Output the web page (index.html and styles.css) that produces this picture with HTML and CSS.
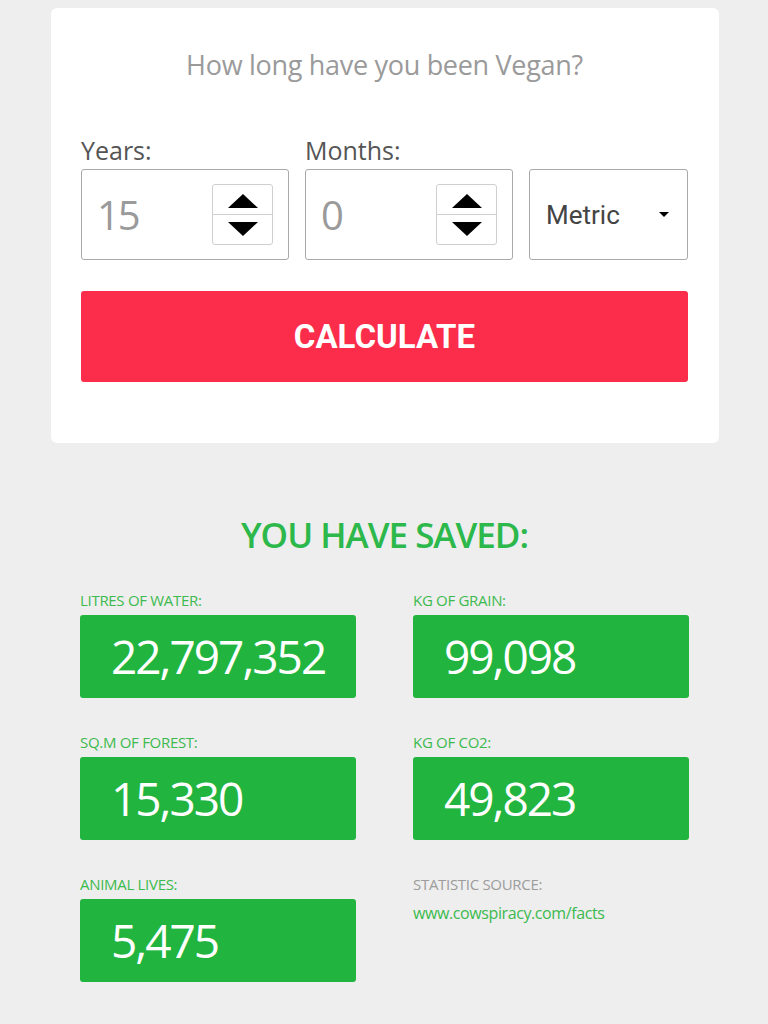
FILE: index.html
```html
<!DOCTYPE html>
<html>
<head>
<meta charset="utf-8">
<link rel="stylesheet" href="styles.css">
</head>
<body>
<div class="card">
  <h1 class="question">How long have you been Vegan?</h1>
  <div class="fields">
    <div class="field">
      <label class="field-label">Years:</label>
      <div class="num-input">
        <span class="num-value">15</span>
        <div class="spinner">
          <span class="spin-btn"><svg width="32" height="16" viewBox="0 0 32 16"><path d="M1 15 L16 1 L31 15 Z" fill="#000"/></svg></span>
          <span class="spin-btn"><svg width="32" height="16" viewBox="0 0 32 16"><path d="M1 1 L31 1 L16 15 Z" fill="#000"/></svg></span>
        </div>
      </div>
    </div>
    <div class="field">
      <label class="field-label">Months:</label>
      <div class="num-input">
        <span class="num-value">0</span>
        <div class="spinner">
          <span class="spin-btn"><svg width="32" height="16" viewBox="0 0 32 16"><path d="M1 15 L16 1 L31 15 Z" fill="#000"/></svg></span>
          <span class="spin-btn"><svg width="32" height="16" viewBox="0 0 32 16"><path d="M1 1 L31 1 L16 15 Z" fill="#000"/></svg></span>
        </div>
      </div>
    </div>
    <div class="field field-select">
      <div class="select">
        <span class="select-value">Metric</span>
        <svg class="caret" width="10" height="5" viewBox="0 0 10 5"><path d="M0 0 L10 0 L5 5 Z" fill="#000"/></svg>
      </div>
    </div>
  </div>
  <button class="calc">CALCULATE</button>
</div>

<section class="results">
  <h2 class="saved">YOU HAVE SAVED:</h2>
  <div class="grid">
    <div class="stat">
      <div class="stat-label">LITRES OF WATER:</div>
      <div class="stat-box">22,797,352</div>
    </div>
    <div class="stat">
      <div class="stat-label">KG OF GRAIN:</div>
      <div class="stat-box">99,098</div>
    </div>
    <div class="stat">
      <div class="stat-label">SQ.M OF FOREST:</div>
      <div class="stat-box">15,330</div>
    </div>
    <div class="stat">
      <div class="stat-label">KG OF CO2:</div>
      <div class="stat-box">49,823</div>
    </div>
    <div class="stat">
      <div class="stat-label">ANIMAL LIVES:</div>
      <div class="stat-box">5,475</div>
    </div>
    <div class="stat source">
      <div class="stat-label gray">STATISTIC SOURCE:</div>
      <a class="source-link" href="#">www.cowspiracy.com/facts</a>
    </div>
  </div>
</section>
</body>
</html>
```

FILE: styles.css
```css
* { box-sizing: border-box; }
html, body { margin: 0; padding: 0; }
body {
  background: #eeeeee;
  font-family: "Open Sans", "Noto Sans", sans-serif;
  width: 768px;
  height: 1024px;
  overflow: hidden;
}
.card {
  width: 668px;
  margin: 8px 0 0 51px;
  background: #fff;
  border-radius: 6px;
  padding: 42px 31px 61px 30px;
}
.question {
  margin: 0;
  text-align: center;
  font-weight: 400;
  font-size: 27px;
  line-height: 30px;
  color: #9a9a9a;
  letter-spacing: -0.3px;
}
.fields {
  display: grid;
  grid-template-columns: 208px 208px 159px;
  column-gap: 16px;
  margin-top: 56px;
  align-items: end;
}
.field-label {
  display: block;
  font-size: 25px;
  line-height: 28px;
  color: #555;
  margin-bottom: 5px;
  letter-spacing: 0;
}
.num-input, .select {
  height: 91px;
  border: 1px solid #a9a9a9;
  border-radius: 3px;
  display: flex;
  align-items: center;
}
.num-input {
  padding: 0 15px 0 15px;
  justify-content: space-between;
}
.num-value {
  font-size: 40px;
  color: #9a9a9a;
  letter-spacing: -2px;
}
.spinner {
  width: 61px;
  height: 61px;
  border: 1px solid #cfcfcf;
  border-radius: 3px;
  display: flex;
  flex-direction: column;
}
.spin-btn {
  flex: 1;
  display: flex;
  align-items: center;
  justify-content: center;
}
.spin-btn + .spin-btn { border-top: 1px solid #cfcfcf; }
.spin-btn svg { display: block; }
.spin-btn:first-child svg { margin-top: 2px; }
.spin-btn:last-child svg { margin-bottom: 2px; }
.select {
  padding: 0 18px 0 16px;
  justify-content: space-between;
}
.select-value {
  font-family: Roboto, "Liberation Sans", sans-serif;
  font-size: 26px;
  color: #444;
}
.caret { display: block; }
.calc {
  display: block;
  width: 607px;
  height: 91px;
  margin-top: 31px;
  border: none;
  border-radius: 3px;
  background: #fc2d4b;
  color: #fff;
  font-family: Roboto, "Liberation Sans", sans-serif;
  font-weight: 700;
  font-size: 33px;
  padding: 0;
}
.results {
  width: 609px;
  margin: 72px 0 0 80px;
}
.saved {
  margin: 0;
  text-align: center;
  font-size: 35px;
  line-height: 40px;
  font-weight: 600;
  color: #2cb84a;
  letter-spacing: -1px;
}
.grid {
  display: grid;
  grid-template-columns: 276px 276px;
  column-gap: 57px;
  row-gap: 35px;
  margin-top: 36px;
}
.stat-label {
  font-size: 15px;
  line-height: 18px;
  color: #3cba4e;
  letter-spacing: -0.3px;
  margin-bottom: 6px;
}
.stat-label.gray { color: #9c9c9c; }
.stat-box {
  height: 83px;
  background: #21b540;
  border-radius: 3px;
  color: #fff;
  font-size: 46px;
  letter-spacing: -2px;
  display: flex;
  align-items: center;
  padding-left: 31px;
  padding-bottom: 2px;
}
.source-link {
  display: block;
  margin-top: 9px;
  font-size: 16px;
  color: #3cba4e;
  text-decoration: none;
  letter-spacing: -0.4px;
}
```
